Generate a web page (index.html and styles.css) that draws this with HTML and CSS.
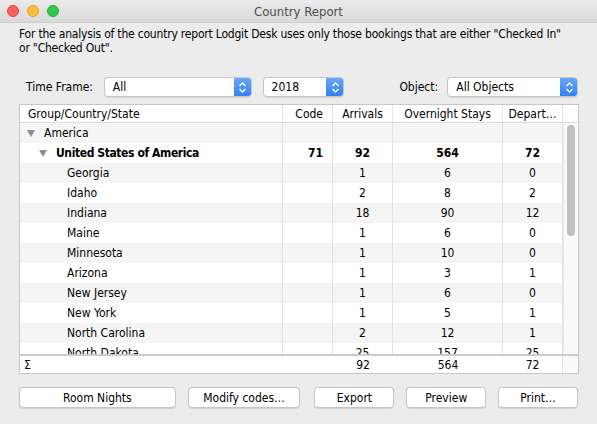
FILE: index.html
```html
<!DOCTYPE html>
<html>
<head>
<meta charset="utf-8">
<link rel="stylesheet" href="styles.css">
</head>
<body>
<div class="window">
  <div class="titlebar">
    <div class="lights">
      <span class="light red"></span>
      <span class="light yellow"></span>
      <span class="light green"></span>
    </div>
    <div class="title">Country Report</div>
  </div>
  <div class="content">
    <p class="intro">For the analysis of the country report Lodgit Desk uses only those bookings that are either "Checked In" or "Checked Out".</p>
    <div class="controls">
      <span class="label lbl-time">Time Frame:</span>
      <div class="popup pop-all"><span class="pop-text">All</span><span class="pop-arrow"><svg width="9" height="13" viewBox="0 0 9 13"><path d="M1.5 5 L4.5 2 L7.5 5 M1.5 8 L4.5 11 L7.5 8" fill="none" stroke="#fff" stroke-width="1.4"/></svg></span></div>
      <div class="popup pop-year"><span class="pop-text">2018</span><span class="pop-arrow"><svg width="9" height="13" viewBox="0 0 9 13"><path d="M1.5 5 L4.5 2 L7.5 5 M1.5 8 L4.5 11 L7.5 8" fill="none" stroke="#fff" stroke-width="1.4"/></svg></span></div>
      <span class="label lbl-obj">Object:</span>
      <div class="popup pop-obj"><span class="pop-text">All Objects</span><span class="pop-arrow"><svg width="9" height="13" viewBox="0 0 9 13"><path d="M1.5 5 L4.5 2 L7.5 5 M1.5 8 L4.5 11 L7.5 8" fill="none" stroke="#fff" stroke-width="1.4"/></svg></span></div>
    </div>
    <div class="table">
      <div class="row head">
        <div class="c c1">Group/Country/State</div>
        <div class="c c2 right">Code</div>
        <div class="c c3">Arrivals</div>
        <div class="c c4">Overnight Stays</div>
        <div class="c c5">Depart…</div>
        <div class="c c6"></div>
      </div>
      <div class="bodywrap">
        <div class="rows">
          <div class="row alt">
            <div class="c c1 lvl0"><span class="tri"></span>America</div>
            <div class="c c2"></div><div class="c c3"></div><div class="c c4"></div><div class="c c5"></div>
          </div>
          <div class="row bold">
            <div class="c c1 lvl1"><span class="tri"></span>United States of America</div>
            <div class="c c2 right">71</div><div class="c c3">92</div><div class="c c4">564</div><div class="c c5">72</div>
          </div>
          <div class="row alt">
            <div class="c c1 lvl2">Georgia</div>
            <div class="c c2"></div><div class="c c3">1</div><div class="c c4">6</div><div class="c c5">0</div>
          </div>
          <div class="row">
            <div class="c c1 lvl2">Idaho</div>
            <div class="c c2"></div><div class="c c3">2</div><div class="c c4">8</div><div class="c c5">2</div>
          </div>
          <div class="row alt">
            <div class="c c1 lvl2">Indiana</div>
            <div class="c c2"></div><div class="c c3">18</div><div class="c c4">90</div><div class="c c5">12</div>
          </div>
          <div class="row">
            <div class="c c1 lvl2">Maine</div>
            <div class="c c2"></div><div class="c c3">1</div><div class="c c4">6</div><div class="c c5">0</div>
          </div>
          <div class="row alt">
            <div class="c c1 lvl2">Minnesota</div>
            <div class="c c2"></div><div class="c c3">1</div><div class="c c4">10</div><div class="c c5">0</div>
          </div>
          <div class="row">
            <div class="c c1 lvl2">Arizona</div>
            <div class="c c2"></div><div class="c c3">1</div><div class="c c4">3</div><div class="c c5">1</div>
          </div>
          <div class="row alt">
            <div class="c c1 lvl2">New Jersey</div>
            <div class="c c2"></div><div class="c c3">1</div><div class="c c4">6</div><div class="c c5">0</div>
          </div>
          <div class="row">
            <div class="c c1 lvl2">New York</div>
            <div class="c c2"></div><div class="c c3">1</div><div class="c c4">5</div><div class="c c5">1</div>
          </div>
          <div class="row alt">
            <div class="c c1 lvl2">North Carolina</div>
            <div class="c c2"></div><div class="c c3">2</div><div class="c c4">12</div><div class="c c5">1</div>
          </div>
          <div class="row">
            <div class="c c1 lvl2">North Dakota</div>
            <div class="c c2"></div><div class="c c3">25</div><div class="c c4">157</div><div class="c c5">25</div>
          </div>
        </div>
        <div class="scrolltrack"><div class="thumb"></div></div>
      </div>
      <div class="row sum">
        <div class="c c1 sigma">Σ</div>
        <div class="c c2"></div><div class="c c3">92</div><div class="c c4">564</div><div class="c c5">72</div>
        <div class="c c6"></div>
      </div>
    </div>
    <div class="buttons">
      <button class="btn b-room">Room Nights</button>
      <button class="btn b-mod">Modify codes…</button>
      <button class="btn b-exp">Export</button>
      <button class="btn b-prev">Preview</button>
      <button class="btn b-print">Print…</button>
    </div>
  </div>
</div>
</body>
</html>
```
FILE: styles.css
```css
* { box-sizing: border-box; }
html, body { margin: 0; padding: 0; }
body {
  font-family: "DejaVu Sans Condensed", "DejaVu Sans", sans-serif;
  font-size: 12px;
  color: #000;
  background: #ececec;
}
.window {
  width: 597px;
  height: 424px;
  background: #ececec;
  overflow: hidden;
}
.titlebar {
  height: 23px;
  background: linear-gradient(#ebebeb, #d9d9d9);
  border-bottom: 1px solid #cfcfcf;
  position: relative;
  display: flex;
  align-items: center;
  justify-content: center;
}
.lights {
  position: absolute;
  left: 7px;
  top: 5px;
  display: flex;
  gap: 8px;
}
.light {
  width: 12px;
  height: 12px;
  border-radius: 50%;
}
.red { background: #fc605c; border: 1px solid #e0443e; }
.yellow { background: #fdbc40; border: 1px solid #dea123; }
.green { background: #34c84a; border: 1px solid #27aa35; }
.title {
  font-size: 13px;
  color: #4d4d4d;
}
.content {
  padding: 4px 19px 0 19px;
}
.intro {
  margin: 0;
  width: 552px;
  line-height: 14px;
  height: 46px;
  letter-spacing: -0.2px;
}
.controls {
  display: flex;
  align-items: center;
  height: 20px;
  margin-top: 4px;
}
.label { color: #000; }
.lbl-time { margin-left: 7px; width: 78px; }
.lbl-obj { margin-left: 55px; width: 48px; }
.popup {
  height: 20px;
  background: #fff;
  border: 1px solid #c6c6c6;
  border-radius: 4px;
  display: flex;
  align-items: center;
  overflow: hidden;
  box-shadow: 0 0.5px 1px rgba(0,0,0,0.08);
}
.pop-text { flex: 1; padding-left: 8px; }
.pop-arrow {
  width: 18px;
  height: 20px;
  margin: -1px -1px -1px 0;
  background: linear-gradient(#69aaf8, #2f7ff4);
  border-radius: 0 4px 4px 0;
  display: flex;
  align-items: center;
  justify-content: center;
}
.pop-all { width: 148px; }
.pop-year { width: 82px; margin-left: 11px; }
.pop-obj { width: 131px; }

.table {
  margin-top: 7px;
  width: 560px;
  height: 270px;
  border: 1px solid #c8c8c8;
  background: #fff;
  display: flex;
  flex-direction: column;
}
.row {
  display: grid;
  grid-template-columns: 263px 50px 60px 110px 60px 15px;
  height: 20px;
  align-items: stretch;
}
.c {
  display: flex;
  align-items: center;
  justify-content: center;
  border-right: 1px solid #e3e3e3;
  white-space: nowrap;
  overflow: hidden;
}
.c.c1 { justify-content: flex-start; }
.c.right { justify-content: flex-end; padding-right: 9px; }
.head {
  height: 18px;
  border-bottom: 1px solid #dcdcdc;
}
.head .c { border-right: 1px solid #e6e6e6; }
.head .c1 { padding-left: 8px; }
.head .c6 { border-right: none; }
.bodywrap {
  position: relative;
  height: 231px;
  overflow: hidden;
  display: flex;
}
.rows {
  width: 543px;
}
.rows .row { grid-template-columns: 263px 50px 60px 110px 60px; }
.row.alt { background: #f5f5f5; }
.row.bold { font-weight: bold; }
.row.bold .c1 { letter-spacing: -0.4px; }
.lvl0 { padding-left: 7px; }
.lvl1 { padding-left: 19px; }
.lvl2 { padding-left: 47px; }
.tri {
  width: 0;
  height: 0;
  border-left: 4px solid transparent;
  border-right: 4px solid transparent;
  border-top: 7px solid #8c8c8c;
  margin-right: 9px;
}
.scrolltrack {
  width: 15px;
  background: #fafafa;
  border-left: 1px solid #e8e8e8;
  position: relative;
}
.thumb {
  position: absolute;
  left: 3px;
  top: 2px;
  width: 8px;
  height: 111px;
  border-radius: 4px;
  background: #c1c1c1;
}
.sum {
  border-top: 2px solid #cbcbcb;
  height: 19px;
}
.sum .c { border-right: none; }
.sum .c5 { border-right: 1px solid #e3e3e3; }
.sum .c6 { background: #fafafa; }
.sigma { padding-left: 4px; }

.buttons {
  display: flex;
  margin-top: 13px;
}
.btn {
  height: 21px;
  background: #fff;
  border: 1px solid #c5c5c5;
  border-radius: 4px;
  font-family: inherit;
  font-size: 12px;
  color: #000;
  padding: 0;
  box-shadow: 0 0.5px 1px rgba(0,0,0,0.1);
}
.b-room { width: 157px; }
.b-mod { width: 113px; margin-left: 12px; }
.b-exp { width: 80px; margin-left: 14px; }
.b-prev { width: 80px; margin-left: 12px; }
.b-print { width: 80px; margin-left: 12px; }
```
